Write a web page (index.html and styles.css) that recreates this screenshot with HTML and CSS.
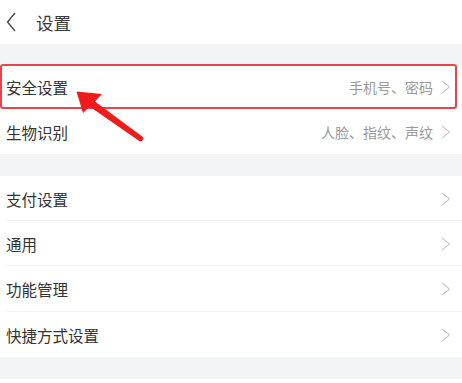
FILE: index.html
```html
<!DOCTYPE html>
<html>
<head>
	<meta charset="utf-8">
	<title>设置</title>
	<link rel="stylesheet" href="styles.css">
</head>
<body>
	<div class="top">
		<svg class="back" width="10" height="20" viewBox="0 0 10 20"><path d="M9 1 L1.5 10 L9 19" fill="none" stroke="#444" stroke-width="1.3"/></svg>
		<span class="title">设置</span>
	</div>

	<div class="gap"></div>
	<div class="group">
		<div class="row hl">
			<span class="name">安全设置</span>
			<span class="sub">手机号、密码</span>
			<svg class="go" width="10" height="14" viewBox="0 0 10 14"><path d="M1 1 L8.5 7 L1 13" fill="none" stroke="#cbcbcb" stroke-width="1.1"/></svg>
		</div>
		<div class="row">
			<span class="name">生物识别</span>
			<span class="sub">人脸、指纹、声纹</span>
			<svg class="go" width="10" height="14" viewBox="0 0 10 14"><path d="M1 1 L8.5 7 L1 13" fill="none" stroke="#cbcbcb" stroke-width="1.1"/></svg>
		</div>
	</div>

	<div class="gap g2"></div>
	<div class="group">
		<div class="row line">
			<span class="name">支付设置</span>
			<svg class="go" width="10" height="14" viewBox="0 0 10 14"><path d="M1 1 L8.5 7 L1 13" fill="none" stroke="#cbcbcb" stroke-width="1.1"/></svg>
		</div>
		<div class="row line">
			<span class="name">通用</span>
			<svg class="go" width="10" height="14" viewBox="0 0 10 14"><path d="M1 1 L8.5 7 L1 13" fill="none" stroke="#cbcbcb" stroke-width="1.1"/></svg>
		</div>
		<div class="row line">
			<span class="name">功能管理</span>
			<svg class="go" width="10" height="14" viewBox="0 0 10 14"><path d="M1 1 L8.5 7 L1 13" fill="none" stroke="#cbcbcb" stroke-width="1.1"/></svg>
		</div>
		<div class="row">
			<span class="name">快捷方式设置</span>
			<svg class="go" width="10" height="14" viewBox="0 0 10 14"><path d="M1 1 L8.5 7 L1 13" fill="none" stroke="#cbcbcb" stroke-width="1.1"/></svg>
		</div>
	</div>
	<div class="gap g2"></div>

	<!-- flèche rouge par-dessus -->
	<svg class="arrow" width="462" height="383" viewBox="0 0 462 383">
		<path d="M76.5 91.5 L102 94 L95 101.5 L143.5 137.5 Q143 141.5 140 141.5 L89.5 106.5 L83 113 Z" fill="#ee1c1c"/>
	</svg>
</body>
</html>
```

FILE: styles.css
```css
body {
	margin: 0;
	background: #fff;
	font-family: "Noto Sans CJK SC", "Noto Sans", sans-serif;
	color: #333;
	position: relative;
	height: 383px;
	overflow: hidden;
}
.top {
	height: 44px;
	display: flex;
	align-items: center;
	padding-left: 6px;
}
.back { margin-right: 20px; }
.title { font-size: 17.5px; color: #3a3a3a; }

.gap { height: 20px; background: #f3f4f6; }
.g2 { height: 22px; }

.row {
	height: 45px;
	display: flex;
	align-items: center;
	padding: 0 11px 0 6px;
	box-sizing: border-box;
	position: relative;
}
.name { font-size: 15.5px; flex: 1; }
.sub { font-size: 14px; color: #9a9a9a; margin-right: 8px; }
.go { flex: none; }

.line::after {
	content: "";
	position: absolute;
	left: 7px; right: 0; bottom: 0;
	height: 1px;
	background: #f0f0f0;
}
.row:nth-child(3) { height: 46px; }

.hl {
	border: 2px solid #e8454b;
	border-radius: 3px;
	margin-right: 5px;
	padding: 0 4px 0 4px;
}

.arrow { position: absolute; left: 0; top: 0; }
```
